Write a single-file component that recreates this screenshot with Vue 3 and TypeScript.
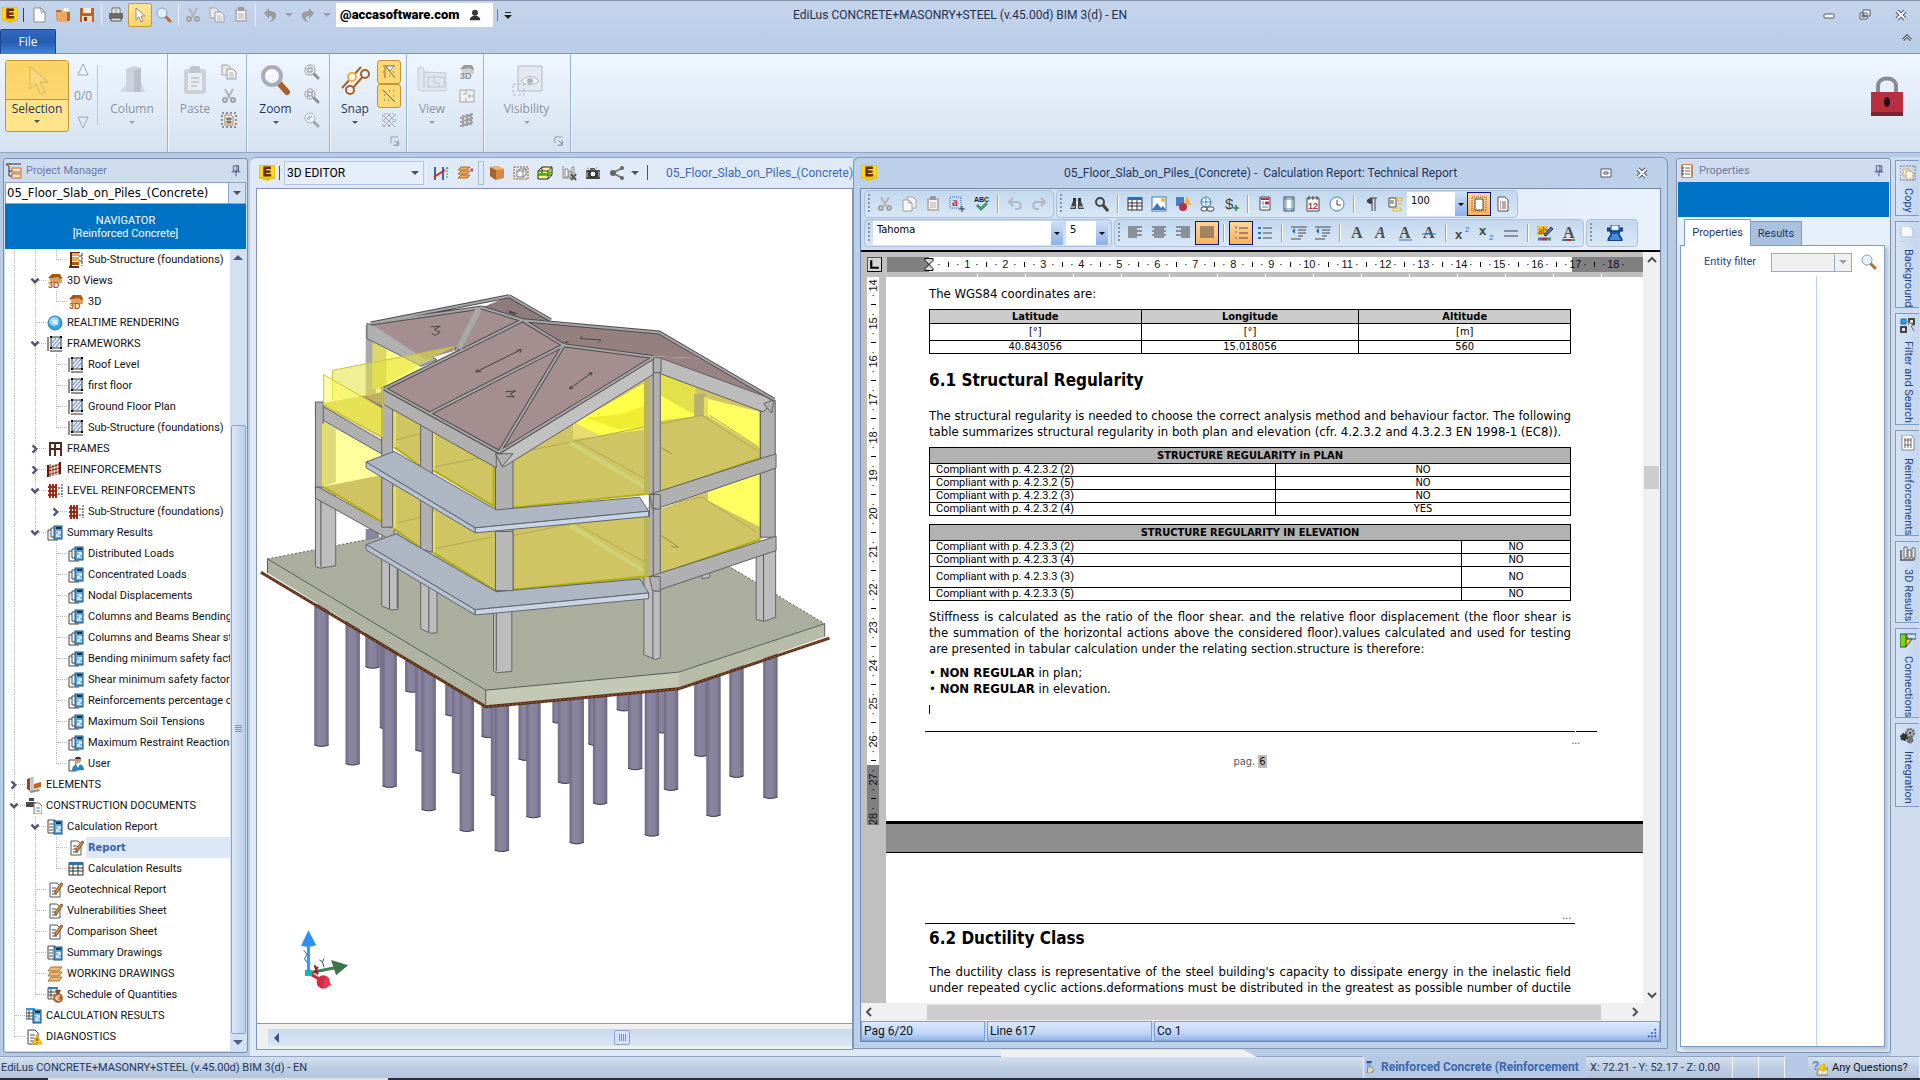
<script setup lang="ts">
interface TreeRow { level: number; icon: string; label: string; state?: 'open' | 'closed'; selected?: boolean; guides: number[]; last?: boolean }
interface Tool { icon?: string; label?: string; sep?: boolean; on?: boolean; combo?: string }

const page = (extra = '') => `<path d="M3 1h7l3 3v11H3z" fill="#fff" stroke="#555" />${extra}`
const lines = (xs: number[][], c = '#4a4a4a') => xs.map(l => `<path d="M${l[0]} ${l[1]}h${l[2]}" stroke="${c}" />`).join('')
const house = (body: string, roof: string, text: string) => `<path d="M2 5l3-4h7l3 4v5H4z" fill="${body}"/><path d="M1 5l4-4h8l2 4-2 1-2-2-6 1z" fill="${roof}"/><text x="1" y="15" font-family="Liberation Sans" font-weight="700" font-size="9" fill="${text}">3D</text>`
const calc = `<rect x="7" y="1" width="8" height="13" fill="#5fa4d8" stroke="#12507f"/><rect x="9" y="2" width="5" height="2" fill="#16324a"/><path d="M9 6h5v6H9z" fill="#cfe6f7"/><path d="M9 7h2v2H9zM12 9h2v2h-2z" fill="#82b6de"/>`
const lens = (c: string, h: string, inner = '') => `<path d="M9 9l5 5" stroke="${h}" stroke-width="3" stroke-linecap="round"/><circle cx="6" cy="6" r="5" fill="#e6f0fa" stroke="${c}" stroke-width="1"/>${inner}`
const alignLines = (w: number[], anchor: 'l' | 'c' | 'r') => w.map((n, i) => `<path d="M${anchor === 'l' ? 1 : anchor === 'c' ? 8 - n / 2 : 15 - n} ${2 + i * 2}h${n}" stroke="#444" />`).join('')
const letter = (extra: string, style = '') => `<text x="2" y="13" font-family="Liberation Serif" font-weight="700" font-size="16" fill="#4d4d4d" ${style}>A</text>${extra}`

const icons: Record<string, string> = {
  logo: `<rect x="0" y="0" width="16" height="13" fill="#ffd91a" stroke="#e0b400"/><path d="M0 13h16l-8 3z" fill="#e8c31a"/><text x="4" y="11" font-family="Liberation Sans" font-weight="700" font-size="12" fill="#6b2a14" stroke="#6b2a14">E</text>`,
  new: `<path d="M3 1h7l4 4v10H3z" fill="#fff" stroke="#8b8b8b"/><path d="M10 1v4h4" fill="none" stroke="#8b8b8b"/>`,
  open: `<path d="M1 3h5l1 2h8v9H2z" fill="#b8692e"/><path d="M1 5h11v10H3z" fill="#eaa765"/><path d="M9 1h4l1 3h-5z" fill="#fff"/>`,
  save: `<path d="M1 1h14v14H1z" fill="#b9622f"/><path d="M4 1h8v5H4z" fill="#f4ece4"/><path d="M3 9h10v6H3z" fill="#f0d9c4"/><path d="M5 10h3v4H5z" fill="#7b3d18"/>`,
  print: `<path d="M4 1h8v6H4z" fill="#fff" stroke="#666"/><path d="M1 6h14v6H1z" fill="#6b6b6b"/><path d="M3 11h10v3H3z" fill="#ddd" stroke="#555"/><path d="M6 3h4M6 5h4" stroke="#888"/>`,
  cursor: `<path d="M4 1v12l3-3 2 5 2-1-2-5h4z" fill="#fff" stroke="#8a8a8a"/>`,
  lens: lens('#7ba3c4', '#bd6a2c'),
  lensBox: lens('#9a9a9a', '#8f8f8f', '<path d="M4 4h4v4H4z" fill="none" stroke="#888"/>'),
  lensGrid: lens('#9a9a9a', '#8f8f8f', '<path d="M4 4h4v4H4zM3 3l1 1M9 3L8 4M3 9l1-1M9 9L8 8" fill="none" stroke="#888"/>'),
  lensNo: lens('#b0b0b0', '#a5a5a5', '<path d="M4 8l4-4M3 7l3-3" stroke="#999"/>'),
  cut: `<path d="M4 1l5 9M12 1l-5 9" stroke="#b4b4b4" stroke-width="2"/><circle cx="4" cy="12" r="2" fill="none" stroke="#a2a2a2" stroke-width="2"/><circle cx="12" cy="12" r="2" fill="none" stroke="#a2a2a2" stroke-width="2"/>`,
  copy: `<path d="M1 1h6l2 2v8H1z" fill="#e8e8e8" stroke="#a5a5a5"/><path d="M6 5h6l3 3v7H6z" fill="#f2f2f2" stroke="#9d9d9d"/>${lines([[8, 9, 4], [8, 11, 5], [8, 13, 5]], '#b5b5b5')}`,
  paste: `<rect x="2" y="2" width="12" height="13" rx="1" fill="#b4b4b4"/><path d="M4 4h8v9H4z" fill="#f3f3f3"/><rect x="5" y="0" width="6" height="4" rx="1" fill="#999"/>${lines([[5, 7, 6], [5, 9, 6], [5, 11, 6]], '#b0b0b0')}`,
  copyFlat: `<path d="M6 1h6l3 3v8H6z" fill="#f4f4f4" stroke="#a5a5a5"/><path d="M2 4h6l3 3v8H2z" fill="#f8f8f8" stroke="#a0a0a0"/><path d="M8 4v3h3" fill="none" stroke="#a0a0a0"/>`,
  undo: `<path d="M2 6l5-5v3c5 0 8 2 7 6-1 3-4 5-7 5 4-2 5-6 0-6v3z" fill="#9c9c9c"/>`,
  redo: `<path d="M14 6L9 1v3C4 4 1 6 2 10c1 3 4 5 7 5-4-2-5-6 0-6v3z" fill="#9c9c9c"/>`,
  undoThin: `<path d="M2 6h8c5 0 5 7 0 7H8M6 2L2 6l4 4" fill="none" stroke="#b3b9c2" stroke-width="2"/>`,
  redoThin: `<path d="M14 6H6c-5 0-5 7 0 7h2M10 2l4 4-4 4" fill="none" stroke="#b3b9c2" stroke-width="2"/>`,
  user: `<circle cx="8" cy="5" r="4" fill="#3a3a3a"/><path d="M1 15c0-4 3-6 7-6s7 2 7 6z" fill="#333"/>`,
  pasteArea: `<path d="M1 1h14v14H1z" fill="none" stroke="#333" stroke-dasharray="2 2"/><path d="M4 3h6l2 2v8H4z" fill="#fff" stroke="#c27a3a"/><path d="M5 7h6M5 10h6M7 5v7M9 5v7" stroke="#555"/>`,
  snapA: `<path d="M2 2h12M5 3l9 11M4 3v11" stroke="#8a6b2d"/><path d="M5 2l4 5 4-5z" fill="#fff" stroke="#888"/><path d="M2 8h1M8 12h1M12 8h1" stroke="#555"/>`,
  snapB: `<path d="M2 2l12 12" stroke="#6d5a22"/><path d="M3 7h1M3 12h1M8 3h1M12 3h1M12 8h1M7 12h1" stroke="#555"/>`,
  hatch: `<path d="M1 2l13 13M1 7l8 8M1 12l3 3M6 1l9 9M11 1l4 4M15 2L2 15M15 7l-8 8M10 1l-9 9M5 1L1 5" stroke="#a5a9af"/>`,
  house3d: house('#d0d0d0', '#9b9b9b', '#8b8b8b'),
  plan: `<path d="M1 2h14v12H1zM7 2v4H4M7 14v-4M10 8h5M10 6v4" fill="#f2f2f2" stroke="#a5a5a5"/>`,
  rebarGray: `<path d="M1 6l13-4M1 10l13-4M1 14l13-4M4 3v12M8 2v12M12 1v12" stroke="#a2a2a2" stroke-width="2"/>`,
  launcher: `<path d="M1 8V1h8" fill="none" stroke="#8b9bb0"/><path d="M5 5l4 4M9 5v5H4" fill="none" stroke="#6b7d96"/>`,
  tree: `<path d="M3 3v10h4M3 8h4M1 1h4" fill="none" stroke="#333"/><rect x="6" y="5" width="9" height="4" fill="#ffe7c9" stroke="#c4672a"/><rect x="6" y="11" width="9" height="4" fill="#ffe7c9" stroke="#c4672a"/><path d="M4 1h11" stroke="#333"/><rect x="0" y="0" width="3" height="3" fill="#c4672a"/>`,
  pin: `<path d="M5 2h6v6H5zM9 2v6M3 9h10M8 9v5" fill="none" stroke="#3d4a73"/>`,
  foundation: `<path d="M3 0h9M3 0v15M1 15h10" stroke="#5a2d0c" stroke-width="2"/><path d="M4 1h7v3H4zM4 5h7v4H4zM4 10h7v3H4z" fill="#e9a868"/><path d="M4 10h7v3H4z" fill="#a55a1c"/><path d="M11 4h3M11 9h3M14 1v13" stroke="#333" stroke-dasharray="3 1"/>`,
  h3d: house('#d9a066', '#a8560e', '#b4560a'),
  globe: `<circle cx="8" cy="8" r="7" fill="#39a5e0"/><circle cx="7" cy="6" r="5" fill="#8fd4f6"/><path d="M4 4l6 1 1 5-5-1z" fill="#e4f6ff" opacity=".8"/><circle cx="8" cy="8" r="7" fill="none" stroke="#1c7ab8"/>`,
  frameworks: `<path d="M1 1v14M3 15h12" stroke="#222"/><path d="M4 1h10v11H4z" fill="#dfe9f7" stroke="#333"/><path d="M5 11l8-9M5 7l4-5M9 11l4-5" stroke="#5d7fb0"/><path d="M3 1h2M13 1h2M3 12h2M13 12h2" stroke="#000" stroke-width="2"/>`,
  frames: `<path d="M2 2h13M2 8h13" stroke="#33241c" stroke-width="2"/><path d="M3 1v14M8 1v14M14 1v14" stroke="#5a2a20" stroke-width="2"/>`,
  rebar: `<path d="M1 6l13-4M1 9l13-3M1 13l13-4M3 2v13M6 3v11M9 2v11M12 1v12" stroke="#8d2a10"/><path d="M1 3v12M13 0v12" stroke="#5c1b0a" stroke-width="2"/>`,
  levelRebar: `<path d="M1 4h9M1 8h9M1 12h9M3 1v14M6 1v14M9 1v14" stroke="#9a2a12" stroke-width="2"/><path d="M11 5h4M11 11h4M15 1v13" stroke="#333" stroke-dasharray="2 1"/>`,
  results: `<path d="M1 5v10h10M1 5h3M4 3v9h5M4 3h3" fill="none" stroke="#444"/>${calc}`,
  userResults: `<path d="M1 4h7v11H1z" fill="#fff" stroke="#444"/><path d="M4 15c0-5 3-7 6-7s6 2 6 6z" fill="#2e7fc2"/><path d="M8 8h4l-2 4z" fill="#fff"/><circle cx="10" cy="4" r="3" fill="#c99a76"/><path d="M7 3c0-3 6-3 6 0z" fill="#333"/>`,
  elements: `<path d="M1 2l3-1v13l-3-2z" fill="#8c4a2a"/><path d="M5 1l2-1v13H5z" fill="#ddd" stroke="#aaa"/><path d="M8 7l7-2v5l-7 2z" fill="#c0641e"/><path d="M3 14l10-2 1 2-9 2z" fill="#9b8b80"/>`,
  documents: `<path d="M3 0h5v3H3zM0 4h10v5H0z" fill="#4a4a4a"/><path d="M8 5h5l3 3v8H8z" fill="#fff" stroke="#777"/>${lines([[10, 10, 4], [10, 13, 4]], '#4a84b8')}`,
  calcReport: `<path d="M1 1h7v13H1z" fill="#fff" stroke="#444"/>${lines([[2, 5, 4], [2, 8, 4], [2, 11, 4]])}<g transform="translate(0 1)">${calc}</g>`,
  report: `${page(lines([[5, 6, 4], [5, 9, 4], [5, 12, 5]]))}<path d="M14 1l2 1-6 9-2 1v-3z" fill="#d18b4a" stroke="#8a4f1c"/>`,
  table: `<rect x="1" y="2" width="14" height="12" fill="#fff" stroke="#333"/><path d="M1 1h14v3H1z" fill="#2c6fb0"/><path d="M1 7h14M1 10h14M5 4v10M10 4v10" stroke="#333"/>`,
  sheets: `<path d="M4 1h11l-3 4H1zM4 6h11l-3 4H1zM4 11h11l-3 4H1z" fill="#eebb77" stroke="#b3712a"/>`,
  schedule: `<path d="M1 1h9v11H1z" fill="#fff" stroke="#444"/><path d="M1 0h10v2H1z" fill="#2c7fc0"/><path d="M1 5h8M1 8h8M4 2v9" stroke="#444"/><circle cx="11" cy="11" r="5" fill="#b5672c"/><path d="M8 3h6l-2 4h-2z" fill="#8b4a1c"/><path d="M13 9c-3-1-4 1-4 2s1 3 4 2M8 11h4" fill="none" stroke="#fff"/>`,
  calcResults: `<path d="M0 1h8v10H0z" fill="#fff" stroke="#444"/><path d="M0 0h9v2H0z" fill="#2c9fd8"/><path d="M0 5h8M0 8h8M3 2v9" stroke="#444"/><g transform="translate(0 1)">${calc}</g>`,
  diagnostics: `<path d="M2 1h7l3 3v11H2z" fill="#fff" stroke="#444"/>${lines([[4, 6, 5], [4, 9, 4], [4, 12, 3]])}<path d="M11 6l5 9H6z" fill="#ffc61a" stroke="#e0a200"/><path d="M11 9v3M11 13v1" stroke="#333"/>`,
  sectionH: `<path d="M2 2v13M10 2v13" stroke="#3f67b0" stroke-width="2"/><path d="M1 12l11-7" stroke="#d02a3a" stroke-width="2"/><path d="M14 2v12M13 4l1-2 1 2" fill="none" stroke="#3d9b6a" stroke-dasharray="2 1"/>`,
  layers: `<path d="M4 2h9l-3 3H1zM4 6h9l-3 3H1zM4 10h9l-3 3H1z" fill="#eeb05c" stroke="#b0682a"/><path d="M15 3v4M13 5h3" stroke="#c02030"/>`,
  cube: `<path d="M1 2l8-1 6 3v9l-8 2-6-4z" fill="#d28a48"/><path d="M1 2l6 3v10l-6-4z" fill="#a8622a"/><path d="M1 2l8-1 6 3-8 1z" fill="#e8b478"/>`,
  cubeSel: `<path d="M1 2h14v12H1z" fill="none" stroke="#a5551c" stroke-dasharray="2 1"/><path d="M4 6l3-2h6v6l-3 2H4z" fill="#fff" stroke="#777"/><path d="M4 6h6v6M10 6l3-2" fill="none" stroke="#777"/>`,
  cubeGreen: `<path d="M1 6l4-4h10v8l-4 4H1z" fill="#f8f890" stroke="#222"/><path d="M1 6h10v8M11 6l4-4M5 2v8H1M5 10h10" fill="none" stroke="#333"/><path d="M1 9l10 0 4-3" fill="none" stroke="#4caf1e" stroke-width="2"/>`,
  barsX: `<path d="M2 1v12h12" fill="none" stroke="#888"/><path d="M4 4h3v8H4zM8 6h2v6H8zM11 2h2v6h-2z" fill="#fff" stroke="#888"/><path d="M10 9l5 6M15 9l-5 6" stroke="#555" stroke-width="2"/>`,
  camera: `<rect x="1" y="5" width="14" height="9" rx="1" fill="#444"/><path d="M5 3h5v3H5z" fill="#666"/><circle cx="8" cy="9" r="3" fill="#fff" stroke="#111"/><path d="M2 7v5M13 7h1v5" stroke="#ccc"/><path d="M2 3l2 1M12 2l-1 2" stroke="#999"/>`,
  share: `<path d="M13 3L4 8l9 5" fill="none" stroke="#777" stroke-width="2"/><circle cx="13" cy="3" r="2" fill="#666"/><circle cx="4" cy="8" r="3" fill="#666"/><circle cx="13" cy="13" r="2" fill="#666"/>`,
  textAdd: `<path d="M1 1h11v11H1z" fill="none" stroke="#1f62b0" stroke-dasharray="1 1"/><text x="3" y="10" font-family="Liberation Serif" font-weight="700" font-size="12" fill="#c02a38">a</text><path d="M13 10v6M10 13h6" stroke="#333"/>`,
  spell: `<text x="1" y="6" font-family="Liberation Sans" font-weight="700" font-size="7" fill="#222">ABC</text><path d="M4 9l4 4 6-6" fill="none" stroke="#3f9a68" stroke-width="3"/>`,
  binoc: `<path d="M4 2h3v5H4zM9 2h3v5H9z" fill="#333"/><path d="M1 13l3-8h3v8zM15 13l-3-8H9v8z" fill="#444"/><path d="M2 11h4M10 11h4M7 7h2" stroke="#fff"/>`,
  find: `<circle cx="7" cy="6" r="4" fill="none" stroke="#444" stroke-width="2"/><path d="M10 9l5 6" stroke="#444" stroke-width="3"/>`,
  image: `<rect x="1" y="1" width="14" height="14" fill="#fff" stroke="#3f78b5"/><path d="M1 14l5-7 4 5 2-2 3 4z" fill="#3f78b5"/><circle cx="12" cy="4" r="2" fill="#f0b429"/>`,
  shapes: `<rect x="1" y="1" width="8" height="9" fill="#4a7fc0"/><path d="M12 0l4 9H9z" fill="#f3b62b"/><circle cx="8" cy="11" r="4" fill="#b8304a"/>`,
  link: `<circle cx="7" cy="6" r="5" fill="#fff" stroke="#3f88c0"/><path d="M2 6h10M7 1v10M4 2c-2 3-2 6 0 8M10 2c2 3 2 6 0 8" fill="none" stroke="#3f88c0"/><rect x="2" y="11" width="6" height="4" rx="2" fill="#fff" stroke="#444"/><rect x="8" y="11" width="7" height="4" rx="2" fill="#fff" stroke="#444"/>`,
  dollar: `<text x="2" y="13" font-family="Liberation Sans" font-size="15" fill="#444">$</text><path d="M13 9v6M10 12h6" stroke="#3f9a68" stroke-width="2"/>`,
  pageRed: `<path d="M3 1h10v13H3z" fill="#fff" stroke="#444"/><path d="M4 3h8" stroke="#b8304a" stroke-width="2"/><path d="M8 7h4" stroke="#b8304a" stroke-width="3"/>${lines([[5, 6, 2], [5, 8, 2], [5, 11, 6]], '#3f78b5')}`,
  pageBlue: `<path d="M3 1h10v14H3z" fill="#fff" stroke="#444"/><path d="M5 1v14M11 1v14M3 3h10M3 13h10" stroke="#3f88c0"/>`,
  calendar: `<path d="M2 2h12v13H2z" fill="#fff" stroke="#444"/><path d="M4 0v4M8 0v4M12 0v4" stroke="#444"/><text x="3" y="13" font-family="Liberation Sans" font-weight="700" font-size="9" fill="#b8304a">12</text>`,
  clock: `<circle cx="8" cy="8" r="7" fill="#fff" stroke="#3f88c0"/><path d="M8 4v5h4" fill="none" stroke="#444"/>`,
  pilcrow: `<path d="M7 2h7M9 2v13M12 2v13" stroke="#444"/><path d="M9 2c-7 0-7 6 0 6z" fill="#444"/>`,
  docNote: `<path d="M2 2h7v9H2z" fill="#fff" stroke="#444"/>${lines([[3, 5, 4], [3, 7, 4]])}<path d="M9 2h6v3h-4zM6 12h8v3H6zM11 8h4" fill="none" stroke="#e8b51e"/>`,
  pageView: `<path d="M1 1h14v14H1z" fill="none" stroke="#a3402a" stroke-dasharray="1 1"/><path d="M4 3h8v11H4z" fill="#fff" stroke="#444"/>`,
  doc: page(lines([[5, 6, 1], [7, 6, 4], [5, 8, 1], [7, 8, 4], [5, 10, 1], [7, 10, 4], [5, 12, 1], [7, 12, 4]], '#8a4a5a')),
  alL: alignLines([14, 9, 14, 9, 14, 9], 'l'),
  alC: alignLines([14, 10, 14, 10, 14, 10], 'c'),
  alR: alignLines([14, 9, 14, 9, 14, 9], 'r'),
  alJ: alignLines([14, 14, 14, 14, 14, 14], 'l'),
  num: `<path d="M3 1v3M2 7h2M2 13h2" stroke="#2a72b8"/>${lines([[6, 3, 9], [6, 8, 9], [6, 13, 9]])}`,
  bul: `<path d="M1 3h3M1 8h3M1 13h3" stroke="#2a72b8" stroke-width="2"/>${lines([[6, 3, 9], [6, 8, 9], [6, 13, 9]])}`,
  ind: `<path d="M1 6l3-3v6z" fill="#2a72b8"/>${lines([[0, 2, 16], [7, 5, 8], [7, 8, 8], [7, 11, 5], [0, 14, 10]])}`,
  bold: letter(''),
  italic: letter('', 'font-style="italic"'),
  under: letter('<path d="M2 15h13" stroke="#2a72b8"/>'),
  strike: letter('<path d="M1 9h14" stroke="#2a72b8"/>'),
  sup: `<text x="0" y="14" font-family="Liberation Sans" font-weight="700" font-size="13" fill="#444">x</text><text x="10" y="7" font-family="Liberation Sans" font-size="8" fill="#2a72b8">2</text>`,
  sub: `<text x="0" y="10" font-family="Liberation Sans" font-weight="700" font-size="13" fill="#444">x</text><text x="10" y="15" font-family="Liberation Sans" font-size="8" fill="#2a72b8">2</text>`,
  equal: `<path d="M1 6h14M1 11h14" stroke="#444"/>`,
  hilite: `<path d="M0 1h11v9H0z" fill="#f2c12e"/><text x="1" y="9" font-family="Liberation Serif" font-size="10" fill="#444">ab</text><path d="M14 2l2 2-7 7-2-1z" fill="#4a84c0" stroke="#333"/><path d="M1 14h4" stroke="#3f78b5" stroke-width="3"/><path d="M5 14h5" stroke="#b8304a" stroke-width="3"/><path d="M10 14h4" stroke="#3f9a68" stroke-width="3"/>`,
  color: letter('<path d="M1 15h4" stroke="#3f78b5" stroke-width="2"/><path d="M5 15h5" stroke="#b8304a" stroke-width="2"/><path d="M10 15h4" stroke="#3f9a68" stroke-width="2"/>'),
  typewriter: `<path d="M4 0h8v6H4z" fill="#e8f1fc" stroke="#123a7c"/><path d="M0 3h3v3h10V3h3v3h-3l-1 3 3 5v2H1v-2l3-5-1-3H0z" fill="#1460b8" stroke="#0b2e66"/><path d="M5 10h6M4 12h8M3 14h10" stroke="#7fb8f2"/>`,
  clipboard: `<rect x="2" y="1" width="12" height="14" rx="2" fill="#c08a5a"/><path d="M4 2h8v12H4z" fill="#fff"/>${lines([[6, 5, 5], [6, 8, 5], [6, 11, 5]], '#666')}<path d="M3 5h2M3 8h2M3 11h2" stroke="#333"/>`,
  sideCopy: `<path d="M0 1h15v14H0z" fill="none" stroke="#777" stroke-dasharray="2 1"/><path d="M3 4h6v7H3z" fill="#f4ead8" stroke="#c9a87a"/><path d="M6 6h5l2 2v6H6z" fill="#f9f3e6" stroke="#c9a87a"/>`,
  sideBg: `<path d="M1 0h9l3 4v7H1z" fill="#f6f8fc" stroke="#b5bfd0"/><text x="1" y="15" font-family="Liberation Sans" font-weight="700" font-size="10" fill="#ee9a72">BG</text>`,
  sideFilter: `<path d="M1 1h5v5H1z" fill="#2ea0e0" stroke="#1a6aa8"/><path d="M9 1h5v5H9zM1 9h5v5H1z" fill="#ddd" stroke="#444" stroke-width="2"/><path d="M7 4l7 3-3 1 3 5" fill="#fff" stroke="#666"/>`,
  sideRebar: `<path d="M2 0h9l3 3v12H2z" fill="#fff" stroke="#888"/><path d="M4 5h7M4 10h7M5 3v10M8 3v10M11 3v10" stroke="#666"/>`,
  sideBars: `<path d="M1 4v10h12l2-2" fill="none" stroke="#777" stroke-width="2"/><path d="M4 1h3v11H4zM8 4h3v8H8zM12 2h3v10h-3z" fill="#eee" stroke="#666"/>`,
  sideConn: `<path d="M0 1h6v13H0z" fill="#6fdc1a" stroke="#444"/><path d="M6 1h10v5H8z" fill="#bfe6fa" stroke="#444"/><path d="M6 6h6l-6 8z" fill="#ffd21a" stroke="#444"/>`,
  gears: `<circle cx="10" cy="5" r="4" fill="#aaa" stroke="#666" stroke-width="2" stroke-dasharray="2 1"/><circle cx="4" cy="9" r="3" fill="#333" stroke="#333" stroke-width="2" stroke-dasharray="2 1"/><circle cx="10" cy="12" r="3" fill="#777" stroke="#555" stroke-dasharray="2 1"/><circle cx="10" cy="5" r="1" fill="#222"/>`,
  ask: `<text x="0" y="10" font-family="Liberation Sans" font-weight="700" font-size="12" fill="#5b86cf">?</text><path d="M5 15l1-6h10v6z" fill="#e8e4d0" stroke="#777"/><path d="M6 9l5-5 2 1-2 4 5-2-4 4z" fill="#ffd21a" stroke="#d9a800"/>`,
  hammer: `<path d="M2 0h7v3H2z" fill="#2b5d9a"/><path d="M4 3l8 8-3 5H3z" fill="#e6d3b3" stroke="#7d6544"/><path d="M3 5h6v4H3z" fill="#7eb4dd"/>`,
}

const quickTools: Tool[] = [
  { icon: 'new', label: 'New' }, { icon: 'open', label: 'Open' }, { icon: 'save', label: 'Save' }, { sep: true },
  { icon: 'print', label: 'Print' }, { icon: 'cursor', label: 'Select', on: true }, { icon: 'lens', label: 'Zoom' }, { sep: true },
  { icon: 'cut', label: 'Cut' }, { icon: 'copy', label: 'Copy' }, { icon: 'paste', label: 'Paste' }, { sep: true },
]

const pile = (x: number, b: number) => ({ x, b: b + 930 })
const piles = [
  [296, 262], [398, 334], [501, 405], [594, 470], [776, 427], [868, 493], [941, 390], [1040, 456],
  [333, 444], [424, 511], [518, 577], [618, 645], [689, 538], [790, 607], [1140, 526], [970, 566],
  [165, 496], [245, 552], [340, 619], [440, 689], [538, 751], [628, 811], [709, 710], [820, 788],
  [880, 670], [1062, 628], [1013, 765], [1230, 589], [1171, 706], [1317, 652],
].map(([x, b]) => pile(x, b))

const res = (label: string): TreeRow => ({ level: 2, icon: 'results', label, guides: [0, 2] })
const rows: TreeRow[] = [
  { level: 2, icon: 'foundation', label: 'Sub-Structure (foundations)', guides: [0, 1, 2], last: true },
  { level: 1, icon: 'h3d', label: '3D Views', state: 'open', guides: [0, 1] },
  { level: 2, icon: 'h3d', label: '3D', guides: [0, 1, 2], last: true },
  { level: 1, icon: 'globe', label: 'REALTIME RENDERING', guides: [0, 1] },
  { level: 1, icon: 'frameworks', label: 'FRAMEWORKS', state: 'open', guides: [0, 1] },
  { level: 2, icon: 'frameworks', label: 'Roof Level', guides: [0, 1, 2] },
  { level: 2, icon: 'frameworks', label: 'first floor', guides: [0, 1, 2] },
  { level: 2, icon: 'frameworks', label: 'Ground Floor Plan', guides: [0, 1, 2] },
  { level: 2, icon: 'frameworks', label: 'Sub-Structure (foundations)', guides: [0, 1, 2], last: true },
  { level: 1, icon: 'frames', label: 'FRAMES', state: 'closed', guides: [0, 1] },
  { level: 1, icon: 'rebar', label: 'REINFORCEMENTS', state: 'closed', guides: [0, 1] },
  { level: 1, icon: 'levelRebar', label: 'LEVEL REINFORCEMENTS', state: 'open', guides: [0, 1] },
  { level: 2, icon: 'levelRebar', label: 'Sub-Structure (foundations)', state: 'closed', guides: [0, 1] },
  { level: 1, icon: 'results', label: 'Summary Results', state: 'open', guides: [0, 1], last: true },
  res('Distributed Loads'), res('Concentrated Loads'), res('Nodal Displacements'),
  res('Columns and Beams Bending'), res('Columns and Beams Shear st'), res('Bending minimum safety factor'),
  res('Shear minimum safety factor'), res('Reinforcements percentage o'), res('Maximum Soil Tensions'), res('Maximum Restraint Reactions'),
  { level: 2, icon: 'userResults', label: 'User', guides: [0, 2], last: true },
  { level: 0, icon: 'elements', label: 'ELEMENTS', state: 'closed', guides: [0] },
  { level: 0, icon: 'documents', label: 'CONSTRUCTION DOCUMENTS', state: 'open', guides: [0] },
  { level: 1, icon: 'calcReport', label: 'Calculation Report', state: 'open', guides: [0, 1] },
  { level: 2, icon: 'report', label: 'Report', guides: [0, 1, 2], selected: true },
  { level: 2, icon: 'table', label: 'Calculation Results', guides: [0, 1, 2], last: true },
  { level: 1, icon: 'report', label: 'Geotechnical Report', guides: [0, 1] },
  { level: 1, icon: 'report', label: 'Vulnerabilities Sheet', guides: [0, 1] },
  { level: 1, icon: 'report', label: 'Comparison Sheet', guides: [0, 1] },
  { level: 1, icon: 'calcReport', label: 'Summary Drawings', guides: [0, 1] },
  { level: 1, icon: 'sheets', label: 'WORKING DRAWINGS', guides: [0, 1] },
  { level: 1, icon: 'schedule', label: 'Schedule of Quantities', guides: [0, 1], last: true },
  { level: 0, icon: 'calcResults', label: 'CALCULATION RESULTS', guides: [0] },
  { level: 0, icon: 'diagnostics', label: 'DIAGNOSTICS', guides: [0], last: true },
]

const t = (icon: string, label: string, on = false): Tool => ({ icon, label, on })
const sep: Tool = { sep: true }
const editGroup: Tool[] = [t('cut', 'Cut'), t('copyFlat', 'Copy'), t('paste', 'Paste'), t('textAdd', 'Insert text'), t('spell', 'Spelling'), sep, t('undoThin', 'Undo'), t('redoThin', 'Redo')]
const insertGroup: Tool[] = [
  t('binoc', 'Find'), t('find', 'Zoom'), sep, t('table', 'Table'), t('image', 'Image'), t('shapes', 'Shapes'), t('link', 'Link'), t('dollar', 'Field'), sep,
  t('pageRed', 'Header'), t('pageBlue', 'Margins'), t('calendar', 'Date'), t('clock', 'Time'), sep, t('pilcrow', 'Show marks'), t('docNote', 'Notes'),
  { combo: '100' }, t('pageView', 'Page view', true), t('doc', 'Document'),
]
const formatGroup: Tool[] = [
  t('alL', 'Align left'), t('alC', 'Centre'), t('alR', 'Align right'), t('alJ', 'Justify', true), sep, t('num', 'Numbering', true), t('bul', 'Bullets'), sep,
  t('ind', 'Decrease indent'), t('ind', 'Increase indent'), sep, t('bold', 'Bold'), t('italic', 'Italic'), t('under', 'Underline'), t('strike', 'Strikethrough'), sep,
  t('sup', 'Superscript'), t('sub', 'Subscript'), t('equal', 'Double line'), sep, t('hilite', 'Highlight'), t('color', 'Font colour'),
]
const editorTools: Tool[] = [t('cube', 'Solid'), t('cubeSel', 'Select volume'), t('cubeGreen', 'Section box'), t('barsX', 'Results off'), t('camera', 'Snapshot'), t('share', 'Share')]

const planRows = [['Compliant with p. 4.2.3.2 (2)', 'NO'], ['Compliant with p. 4.2.3.2 (5)', 'NO'], ['Compliant with p. 4.2.3.2 (3)', 'NO'], ['Compliant with p. 4.2.3.2 (4)', 'YES']]
const elevRows = [['Compliant with p. 4.2.3.3 (2)', 'NO'], ['Compliant with p. 4.2.3.3 (4)', 'NO'], ['Compliant with p. 4.2.3.3 (3)', 'NO'], ['Compliant with p. 4.2.3.3 (5)', 'NO']]
const vRuler = Array.from({ length: 15 }, (_, i) => 14 + i)

const sideTabs = [
  { icon: 'sideCopy', label: 'Copy', h: 56 }, { icon: 'sideBg', label: 'Background', h: 87 }, { icon: 'sideFilter', label: 'Filter and Search', h: 112 },
  { icon: 'sideRebar', label: 'Reinforcements', h: 106 }, { icon: 'sideBars', label: '3D Results', h: 82 }, { icon: 'sideConn', label: 'Connections', h: 90 },
  { icon: 'gears', label: 'Integration', h: 84 },
]
</script>

<template>
  <div class="app">
    <header class="titlebar">
      <div class="quick">
        <button class="tb logo" aria-label="Application menu"><svg viewBox="0 0 16 16" v-html="icons.logo" /></button>
        <i class="bar" />
        <template v-for="(q, i) in quickTools" :key="i">
          <i v-if="q.sep" class="qsep" />
          <button v-else class="tb" :class="{ on: q.on }" :aria-label="q.label"><svg viewBox="0 0 16 16" v-html="icons[q.icon!]" /></button>
        </template>
        <button class="tb" aria-label="Undo"><svg viewBox="0 0 16 16" v-html="icons.undo" /></button><i class="caret dim" />
        <button class="tb" aria-label="Redo"><svg viewBox="0 0 16 16" v-html="icons.redo" /></button><i class="caret dim" />
        <div class="account"><b>@accasoftware.com</b><svg viewBox="0 0 16 16" v-html="icons.user" /></div>
        <i class="thin" /><svg class="more" viewBox="0 0 8 8"><path d="M1 1h6v1H1zM0 4h8L4 8z" fill="#222" /></svg>
      </div>
      <h1 class="apptitle">EdiLus CONCRETE+MASONRY+STEEL (v.45.00d) BIM 3(d) - EN</h1>
      <div class="winbtns">
        <button aria-label="Minimise"><svg viewBox="0 0 12 12"><rect x="1" y="5" width="10" height="4" rx="1" fill="#fff" stroke="#4f5668" /></svg></button>
        <button aria-label="Restore"><svg viewBox="0 0 12 12"><path d="M4 1h7v6H4zM1 4h7v6H1zM3 6h3v2H3z" fill="#fff" stroke="#4f5668" /></svg></button>
        <button aria-label="Close"><svg viewBox="0 0 12 12"><path d="M2 2l8 8M10 2l-8 8" stroke="#4f5668" stroke-width="4" /><path d="M2 2l8 8M10 2l-8 8" stroke="#fff" stroke-width="2" /></svg></button>
      </div>
      <div class="tabrow">
        <button class="file">File</button>
        <button class="collapse" aria-label="Collapse ribbon"><svg viewBox="0 0 10 8"><path d="M1 6l4-4 4 4" fill="none" stroke="#4f5668" stroke-width="3" /><path d="M1 6l4-4 4 4" fill="none" stroke="#fff" /></svg></button>
      </div>
    </header>

    <section class="ribbon">
      <div class="group sel">
        <button class="big active"><span class="face"><svg viewBox="0 0 32 32"><path d="M9 2v23l6-5 4 10 5-2-5-10h8z" fill="#f9d87c" stroke="#d9b25a" /></svg></span><span class="cap">Selection</span><i class="caret" /></button>
        <div class="counter">
          <svg viewBox="0 0 14 14"><path d="M7 1l5 11H2z" fill="none" stroke="#a3aab5" /></svg>
          <span>0/0</span>
          <svg viewBox="0 0 14 14"><path d="M7 13L2 2h10z" fill="none" stroke="#a3aab5" /></svg>
        </div>
        <i class="gsep" />
        <button class="big off column"><span class="face"><svg viewBox="0 0 32 32"><path d="M10 5l8-3 7 2v24H10z" fill="#cdd3dc" /><path d="M18 7l7-3v24h-7z" fill="#bac1cc" /><path d="M3 28l7-7v7zM25 28V18l4 10z" fill="#d3d9e1" /></svg></span><span class="cap">Column</span><i class="caret dim" /></button>
      </div>
      <div class="group pasteg">
        <button class="big off"><span class="face"><svg viewBox="0 0 32 32"><rect x="5" y="5" width="22" height="25" rx="3" fill="#cbd1d9" /><path d="M9 9h14v17H9z" fill="#eaeef3" /><rect x="11" y="2" width="10" height="7" rx="2" fill="#bec5cf" /><path d="M12 14h8M12 18h8M12 22h6" stroke="#c6ccd5" stroke-width="2" /></svg></span><span class="cap">Paste</span></button>
        <div class="smalls"><button v-for="n in ['copy', 'cut', 'pasteArea']" :key="n" :aria-label="n"><svg viewBox="0 0 16 16" v-html="icons[n]" /></button></div>
      </div>
      <div class="group zoomg">
        <button class="big"><span class="face"><svg viewBox="0 0 32 32"><path d="M18 18l9 10" stroke="#a8602c" stroke-width="6" stroke-linecap="round" /><circle cx="12" cy="12" r="9" fill="#f2f5f9" stroke="#a9aeb6" stroke-width="4" /><path d="M7 11c1-4 6-5 9-2" fill="none" stroke="#fff" stroke-width="3" /></svg></span><span class="cap">Zoom</span><i class="caret" /></button>
        <div class="smalls"><button v-for="n in ['lensBox', 'lensGrid', 'lensNo']" :key="n" :aria-label="n"><svg viewBox="0 0 16 16" v-html="icons[n]" /></button></div>
      </div>
      <div class="group snapg">
        <button class="big"><span class="face"><svg viewBox="0 0 32 32"><path d="M3 24L22 3M12 26l15-17" stroke="#a5612c" stroke-width="2" /><circle cx="13" cy="13" r="4" fill="#fff" stroke="#f0b03a" stroke-width="2" /><circle cx="26" cy="10" r="4" fill="#eef4fb" stroke="#a5612c" stroke-width="2" /><circle cx="11" cy="26" r="4" fill="#eef4fb" stroke="#a5612c" stroke-width="2" /></svg></span><span class="cap">Snap</span><i class="caret" /></button>
        <div class="smalls"><button v-for="(n, i) in ['snapA', 'snapB', 'hatch']" :key="n" :class="{ on: i < 2 }" :aria-label="n"><svg viewBox="0 0 16 16" v-html="icons[n]" /></button></div>
        <svg class="launcher" viewBox="0 0 12 12" v-html="icons.launcher" />
      </div>
      <div class="group viewg">
        <button class="big off"><span class="face"><svg viewBox="0 0 32 32"><path d="M2 4c6-3 6 2 6 4l22 1v18H6c-4 0-4-4-4-4z" fill="#e1e6ed" stroke="#c3c9d2" /><path d="M12 13h16v10H12zM18 13v6h5v4M8 8v16" fill="none" stroke="#bcc3cd" /></svg></span><span class="cap">View</span><i class="caret dim" /></button>
        <div class="smalls"><button v-for="n in ['house3d', 'plan', 'rebarGray']" :key="n" :aria-label="n"><svg viewBox="0 0 16 16" v-html="icons[n]" /></button></div>
      </div>
      <div class="group visg">
        <button class="big off"><span class="face"><svg viewBox="0 0 32 32"><path d="M7 2h24v25H7z" fill="#e4e9f0" stroke="#b4bac5" /><path d="M2 20h11v11H2z" fill="none" stroke="#b4bac5" stroke-dasharray="3 2" /><path d="M10 17c5-6 13-6 18 0-5 5-13 5-18 0z" fill="#f2f4f7" stroke="#b0b6c1" /><circle cx="19" cy="17" r="3" fill="#b0b6c1" /></svg></span><span class="cap">Visibility</span><i class="caret dim" /></button>
        <svg class="launcher" viewBox="0 0 12 12" v-html="icons.launcher" />
      </div>
      <svg class="lock" viewBox="0 0 34 42"><path d="M8 20v-8c0-10 18-10 18 0v8" fill="none" stroke="#8b8b8b" stroke-width="4" /><path d="M1 18h32v24H1z" fill="#b8303f" /><path d="M1 38h32v4H1z" fill="#7d2230" /><ellipse cx="17" cy="28" rx="3" ry="5" fill="#1c1114" /></svg>
    </section>

    <main class="main">
      <aside class="panel nav">
        <div class="phead"><svg viewBox="0 0 16 16" v-html="icons.tree" /><span>Project Manager</span><svg class="pin" viewBox="0 0 16 16" v-html="icons.pin" /></div>
        <div class="combo"><select aria-label="Project"><option>05_Floor_Slab_on_Piles_(Concrete)</option></select><i class="drop"><i class="caret" /></i></div>
        <div class="navigator">NAVIGATOR<br>[Reinforced Concrete]</div>
        <div class="treebox">
          <ul class="tree">
            <li v-for="(r, i) in rows" :key="i" :class="['l' + r.level, { selected: r.selected }]">
              <i v-for="g in r.guides" :key="g" class="guide" :class="['g' + g, { half: r.last && g === r.level }]" />
              <i class="branch" />
              <svg class="chev" viewBox="0 0 10 10"><path v-if="r.state === 'open'" d="M2 3l3 3 3-3" fill="none" stroke="#4f5673" stroke-width="2" /><path v-if="r.state === 'closed'" d="M3 2l3 3-3 3" fill="none" stroke="#4f5673" stroke-width="2" /></svg>
              <svg class="ticon" viewBox="0 0 16 16" v-html="icons[r.icon]" />
              <span>{{ r.label }}</span>
            </li>
          </ul>
          <div class="vscroll"><i class="up" /><i class="space" /><i class="thumb"><i class="grip" /></i><i class="down" /></div>
        </div>
      </aside>

      <div class="mdi">
        <section class="editor">
          <div class="etools">
            <svg class="elogo" viewBox="0 0 16 16" v-html="icons.logo" /><i class="bar" />
            <div class="ecombo"><select aria-label="Editor"><option>3D EDITOR</option></select><i class="caret" /></div>
            <i class="qsep" />
            <button class="tb" aria-label="Section"><svg viewBox="0 0 16 16" v-html="icons.sectionH" /></button>
            <button class="tb" aria-label="Layers"><svg viewBox="0 0 16 16" v-html="icons.layers" /></button>
            <i class="slot" />
            <button v-for="e in editorTools" :key="e.icon" class="tb" :aria-label="e.label"><svg viewBox="0 0 16 16" v-html="icons[e.icon!]" /></button>
            <i class="caret" /><i class="bar late" />
            <span class="etitle">05_Floor_Slab_on_Piles_(Concrete)</span>
          </div>
          <div class="canvas">
            <svg class="model" viewBox="257 189 594 833" preserveAspectRatio="xMinYMin slice">
              <defs><linearGradient id="pile"><stop offset="0" stop-color="#6f6a86" /><stop offset=".3" stop-color="#8a86a0" /><stop offset=".7" stop-color="#85819b" /><stop offset="1" stop-color="#6a6680" /></linearGradient></defs>
              <g transform="translate(250 270) scale(.389 .3333)">
                <g v-for="p in piles" :key="p.x"><path :d="`M${p.x} 1000H${p.x + 37}V${p.b - 4}q-18 9-37 0z`" fill="url(#pile)" /><path :d="`M${p.x} ${p.b - 4}q18 9 37 0`" fill="none" stroke="#3b3948" class="ns" /></g>
                <path d="M45 865L340 798 760 715 1050 780 1226 885 1475 1059 1100 1204 605 1258z" fill="#abae9d" />
                <path d="M45 865L605 1258V1306L45 907z" fill="#aeb4a1" />
                <path d="M605 1258L1100 1204V1251L605 1306z" fill="#c4c9b5" />
                <path d="M1100 1204L1475 1059V1098L1100 1251z" fill="#b7bca9" />
                <path d="M45 907V865L605 1258 1100 1204 1475 1059V1098M605 1258V1300" fill="none" stroke="#5c5f57" class="ns" />
                <path d="M45 865L340 798M1226 885L1475 1059" stroke="#5c5f57" stroke-dasharray="2 2" class="ns" />
                <path d="M28 905L605 1308 1100 1254 1487 1102" fill="none" stroke="#5b3018" stroke-width="3" class="ns" />
                <path d="M28 905L605 1308 1100 1254 1487 1102" fill="none" stroke="#9a6038" stroke-width="1" stroke-dasharray="2 2" class="ns" />
                <path d="M297 775h34v27l-34 8z" fill="#8a86a0" />
                <g class="cols">
                  <path d="M1160 880h20v40l-20 4z" /><path d="M168 640h52v245l-40 8-12-5z" /><path d="M338 760h42v256l-16 2-26-12z" /><path d="M438 820h42v266l-16 2-26-14z" /><path d="M625 950h47v252l-40 4-7-6z" /><path d="M1011 900h42v262l-14 4-28-14z" /><path d="M1299 820h50v220l-30 12-20-6z" />
                </g>
                <path d="M182 660V890M358 800v215M378 800v212M459 850v235M632 960v240M1034 950v212M1318 850v200" stroke="#55555a" class="ns" />
                <path d="M297 165h26v225l-26 8z" class="c2" />
                <path d="M315 215L450 300 450 330 340 360 315 350z" fill="#ffff86" /><path d="M315 215L350 238V355H315z" fill="#dcd968" />
                <path d="M190 455L345 555V620L190 650z" fill="#ffff9e" /><path d="M190 455l30 20v160l-30 12z" fill="#deda7c" />
                <path d="M190 648L345 612V760z" fill="#cfc461" />
                <path d="M175 400L340 365V505z" fill="#cfc258" /><path d="M290 378l50-12v50z" fill="#8b7484" />
                <g class="beam">
                  <path d="M300 160L323 165 480 268 440 288 300 205z" />
                  <path d="M168 395L345 515V555L168 437z" /><path d="M168 645L370 775V815L168 683z" />
                  <path d="M168 395h20v255h-20z" />
                </g>
                <path d="M365 400L630 545V715L365 530z" fill="#cfc563" /><path d="M365 640L630 720V962L365 775z" fill="#cfc563" />
                <path d="M675 560L1025 315V670L675 710z" fill="#cfc564" />
                <path d="M830 460L1025 330V475L890 497 830 505z" fill="#ffff48" /><path d="M860 442l90-10 75-30v70l-80 4z" fill="#f0ec30" /><path d="M830 455l70 40-70 10z" fill="#e8dc70" />
                <path d="M675 765L1025 730V916L675 957z" fill="#cfc564" />
                <path d="M1053 310L1310 420V562L1053 665z" fill="#cfc564" />
                <path d="M1053 325L1150 370V436L1053 452z" fill="#ffff50" /><path d="M1053 310l90 40v85l-90-60z" fill="#e4e04a" /><path d="M1175 385L1310 425V535L1175 437z" fill="#ffff62" />
                <path d="M1140 370h30v68h-30z" fill="#b8b070" />
                <path d="M1053 715L1310 608V805L1053 912z" fill="#cfc564" /><path d="M1175 665L1310 608V770L1175 690z" fill="#ffff62" />
                <path d="M815 515L1010 645M835 510L1025 632M815 762L1010 895M835 758L1025 882M675 550L1160 435M675 795L1160 680M1160 435L1300 540M1180 435L1305 530M1160 680L1300 785M470 590L620 555M470 835L620 800M370 510L437 490M370 760L437 740" fill="none" stroke="#b2ab55" class="ns" />
                <path d="M820 516L1010 648M820 764L1010 900" stroke="#cdd478" stroke-width="4" class="ns" />
                <path d="M675 712L1025 670M1053 665L1310 562M675 957L1025 916M1053 910L1310 806M1310 420V562M1310 608V805M470 600L630 710M470 845L630 960M370 530L437 585M370 775L437 830M190 650L340 755M625 590V705" fill="none" stroke="#b3ae12" stroke-width="2" class="ns" />
                <path d="M370 412V530M470 480V600M470 725V845M370 650V770M190 460V648M1170 380V437" fill="none" stroke="#e3e060" stroke-width="4" class="ns" />
                <path d="M1082 550l-25-18M1100 830l-45-35M1100 830l-20-2" stroke="#98904a" class="ns" />
                <g class="beam">
                  <path d="M338 350h28v420h-28z" /><path d="M438 430h30v415l-30-10z" />
                  <path d="M630 550h45v410h-45z" /><path d="M1025 265h28v655h-28z" />
                  <path d="M1310 390h38v410h-38z" />
                  <path d="M1025 672L1350 550V593L1040 716z" /><path d="M1025 918L1350 797V840L1040 962z" />
                  <path d="M1025 672h28v44l-20-2zM1025 918h28v44l-20-2z" />
                </g>
                <path d="M1011 315h16v355h-16zM1011 740h16v176h-16z" fill="#b8b460" />
                <path d="M1035 310V916" stroke="#606064" class="ns" />
                <g class="slab">
                  <path d="M298 575L370 543 632 718 1000 680 1023 722 578 772z" /><path d="M298 822L375 790 632 963 1000 925 1023 967 578 1017z" />
                  <path d="M298 575L578 772V787L298 592zM298 822L578 1017V1033L298 838z" fill="#b6c1d1" />
                  <path d="M578 772L1023 722V738L578 787zM578 1017L1023 967V984L578 1033z" fill="#cad5e4" />
                </g>
                <path d="M630 783h45v177h-45z" fill="#b8b8b8" stroke="#66666a" class="ns" />
                <g class="roof">
                  <path d="M310 160L595 112 700 150 530 240 450 268z" /><path d="M595 112L665 78 772 150 700 150z" fill="#8f7b7c" />
                  <path d="M700 150L1050 187 1165 265 1035 258 805 225z" fill="#95807f" /><path d="M1035 258L1165 265 1345 388z" fill="#998283" />
                  <path d="M345 355L700 150 805 225 1035 262 640 545 460 430z" />
                </g>
                <g class="beam">
                  <path d="M343 355L632 545V592L343 402z" />
                  <path d="M630 550L1035 264V312L675 572 650 590z" fill="#c1c1c1" /><path d="M1050 262L1345 388 1318 425 1053 310z" fill="#bcbcbc" />
                  <path d="M1035 262h20v45h-20zM630 550h45l-28 38zM1318 400l27-12-6 40z" />
                </g>
                <path d="M212 300L522 230 470 262 345 345 345 410 290 376 212 390z" fill="#e6e13c" fill-opacity=".55" />
                <path d="M212 390V300L522 230V243" fill="none" stroke="#c9c53a" class="ns" />
                <path d="M189 313L340 415V500L189 403z" fill="#ffff52" fill-opacity=".5" stroke="#c9c53a" class="ns" />
                <g class="outer"><path d="M310 160L665 78M310 160L595 112M530 240L590 112M665 78L772 150M595 112L700 150M700 150L1050 187 1165 265 1345 388M345 355L700 150 805 225 1035 260M460 430L805 225 640 545M345 355L640 545 1035 262" /></g>
                <g class="inner"><path d="M310 160L665 78M310 160L595 112M530 240L590 112M665 78L772 150M595 112L700 150M700 150L1050 187 1165 265 1345 388M345 355L700 150 805 225 1035 260M460 430L805 225 640 545M345 355L640 545 1035 262" /></g>
                <path d="M535 235L588 115" stroke="#a9a9a9" stroke-width="6" class="ns" />
                <path d="M580 305L696 238M584 296l-4 9 14-2M684 240l12-2-3 10M820 355l58-48M824 347l-4 8 10-1M868 309l10-2-2 9M848 205l52 4M848 205l4-8M900 209l-4 7M464 170l24-2-15 10 15 8-14 10-8-8M656 364l26-2-14 8 10 10-20-2M664 122l20 8-20-4 16 8" fill="none" stroke="#474145" class="ns" />
                <g fill="none">
                  <path d="M150 2105V2010" stroke="#2f97ff" stroke-width="3" class="ns" /><path d="M150 1977L170 2022q-20 8-39 2z" fill="#2f8ff5" />
                  <path d="M150 2105L225 2088" stroke="#3d8050" stroke-width="3" class="ns" /><path d="M208 2066L252 2082 221 2112z" fill="#3b7549" />
                  <path d="M150 2105L180 2125" stroke="#d02438" stroke-width="3" class="ns" /><ellipse cx="188" cy="2132" rx="17" ry="20" fill="#d42a44" /><path d="M195 2114l14 27-24 12z" fill="#e63a56" />
                  <path d="M141 2096h18v18h-18z" fill="#12b5bb" />
                  <path d="M138 2037l8 12-6 14 6 10" stroke="#2b5da8" class="ns" /><path d="M178 2066l8 6 4-10M186 2072l4 16" stroke="#2b5e38" class="ns" /><path d="M166 2082l8 28M174 2086l-8 20" stroke="#a01c2a" stroke-width="2" class="ns" />
                </g>
              </g>
            </svg>
          </div>
          <div class="ehscroll"><div class="etrack"><i class="left" /><i class="ethumb" /></div></div>
        </section>

        <div class="reportcol">
          <section class="report">
            <div class="rtitle">
              <svg class="elogo" viewBox="0 0 16 16" v-html="icons.logo" />
              <h2>05_Floor_Slab_on_Piles_(Concrete) -&nbsp; Calculation Report: Technical Report</h2>
              <button aria-label="Maximise"><svg viewBox="0 0 12 12"><path d="M1 2h10v8H1zM4 5h4v2H4z" fill="#fff" stroke="#4f5668" /></svg></button>
              <button aria-label="Close report"><svg viewBox="0 0 12 12"><path d="M2 2l8 8M10 2l-8 8" stroke="#4f5668" stroke-width="4" /><path d="M2 2l8 8M10 2l-8 8" stroke="#fff" stroke-width="2" /></svg></button>
            </div>
            <div class="rbody">
              <div class="rtools">
                <div class="trow">
                  <div v-for="(grp, gi) in [editGroup, insertGroup]" :key="gi" class="tgroup">
                    <i class="tgrip" />
                    <template v-for="(b, i) in grp" :key="i">
                      <i v-if="b.sep" class="tsep" />
                      <div v-else-if="b.combo" class="fcombo zoom"><select aria-label="Zoom level"><option>{{ b.combo }}</option></select><i class="fdrop"><i class="caret dark" /></i></div>
                      <button v-else class="tool" :class="{ on: b.on }" :aria-label="b.label"><svg viewBox="0 0 16 16" v-html="icons[b.icon!]" /></button>
                    </template>
                  </div>
                </div>
                <div class="trow">
                  <div class="tgroup">
                    <i class="tgrip" />
                    <div class="fcombo font"><select aria-label="Font"><option>Tahoma</option></select><i class="fdrop"><i class="caret dark" /></i></div>
                    <div class="fcombo size"><select aria-label="Font size"><option>5</option></select><i class="fdrop"><i class="caret dark" /></i></div>
                  </div>
                  <div class="tgroup">
                    <i class="tgrip" />
                    <template v-for="(b, i) in formatGroup" :key="i">
                      <i v-if="b.sep" class="tsep" />
                      <button v-else class="tool" :class="{ on: b.on }" :aria-label="b.label"><svg viewBox="0 0 16 16" v-html="icons[b.icon!]" /></button>
                    </template>
                  </div>
                  <div class="tgroup wide"><i class="tgrip" /><button class="tool" aria-label="Typewriter"><svg viewBox="0 0 16 16" v-html="icons.typewriter" /></button></div>
                </div>
              </div>
              <div class="docrow">
                <div class="doccol">
                  <div class="hruler">
                    <i class="tabstop"><svg viewBox="0 0 12 12"><path d="M3 2v7h7" fill="none" stroke="#000" stroke-width="2" /></svg></i>
                    <div class="hscale">
                      <i class="pre"><svg viewBox="0 0 10 14"><path d="M1 1h8v2L5 7l4 4v2H1v-2l4-4-4-4z" fill="#d8d8d8" stroke="#000" /></svg></i>
                      <span v-for="n in 18" :key="n" class="hcell" :class="{ edge: n === 17, out: n > 17 }"><i>·</i><i class="tick" /><i>·</i><b>{{ n }}</b></span>
                      <i class="rest">·</i>
                    </div>
                  </div>
                  <div class="marks"><i v-for="n in 16" :key="n" /></div>
                  <div class="docmid">
                    <div class="vruler"><div class="vscale"><span v-for="n in vRuler" :key="n" class="vcell" :class="{ edge: n === 26, out: n > 26 }"><b>{{ n }}</b><i>·</i><i class="tick" /><i>·</i></span></div></div>
                    <article class="pages">
                      <div class="sheet first">
                        <p>The WGS84 coordinates are:</p>
                        <table class="t1">
                          <colgroup><col class="w33"><col class="w35"><col></colgroup>
                          <thead><tr><th>Latitude</th><th>Longitude</th><th>Altitude</th></tr></thead>
                          <tbody><tr class="unit"><td>[°]</td><td>[°]</td><td>[m]</td></tr><tr><td>40.843056</td><td>15.018056</td><td>560</td></tr></tbody>
                        </table>
                        <h3>6.1 Structural Regularity</h3>
                        <p class="just"><span>The structural regularity is needed to choose the correct analysis method and behaviour factor. The following</span><span class="end">table summarizes structural regularity in both plan and elevation (cfr. 4.2.3.2 and 4.3.2.3 EN 1998-1 (EC8)).</span></p>
                        <table class="t2">
                          <colgroup><col class="w54"><col></colgroup>
                          <thead><tr><th colspan="2">STRUCTURE REGULARITY in PLAN</th></tr></thead>
                          <tbody><tr v-for="r in planRows" :key="r[0]"><td>{{ r[0] }}</td><td>{{ r[1] }}</td></tr></tbody>
                        </table>
                        <table class="t2">
                          <colgroup><col class="w83"><col></colgroup>
                          <thead><tr><th colspan="2">STRUCTURE REGULARITY IN ELEVATION</th></tr></thead>
                          <tbody><tr v-for="(r, i) in elevRows" :key="r[0]" :class="{ tall: i === 2 }"><td>{{ r[0] }}</td><td>{{ r[1] }}</td></tr></tbody>
                        </table>
                        <p class="just"><span>Stiffness is calculated as the ratio of the floor shear. and the relative floor displacement (the floor shear is</span><span>the summation of the horizontal actions above the considered floor).values calculated and used for testing</span><span class="end">are presented in tabular calculation under the relating section.structure is therefore:</span></p>
                        <ul class="bullets"><li>• <b>NON REGULAR</b> in plan;</li><li>• <b>NON REGULAR</b> in elevation.</li></ul>
                        <i class="textcursor" />
                        <div class="footline"><i /><i /></div>
                        <div class="dots">...</div>
                        <div class="pagenum">pag. <span>6</span></div>
                      </div>
                      <div class="gapbar" />
                      <div class="sheet second">
                        <div class="dots">...</div>
                        <div class="headline" />
                        <h3>6.2 Ductility Class</h3>
                        <p class="just"><span>The ductility class is representative of the steel building's capacity to dissipate energy in the inelastic field</span><span>under repeated cyclic actions.deformations must be distributed in the greatest as possible number of ductile</span></p>
                      </div>
                    </article>
                  </div>
                </div>
                <div class="dvscroll"><svg viewBox="0 0 10 8"><path d="M1 6l4-4 4 4" fill="none" stroke="#505050" stroke-width="2" /></svg><i class="dthumb" /><svg viewBox="0 0 10 8"><path d="M1 2l4 4 4-4" fill="none" stroke="#505050" stroke-width="2" /></svg></div>
              </div>
              <div class="dhscroll"><svg viewBox="0 0 8 10"><path d="M6 1L2 5l4 4" fill="none" stroke="#505050" stroke-width="2" /></svg><i /><svg viewBox="0 0 8 10"><path d="M2 1l4 4-4 4" fill="none" stroke="#505050" stroke-width="2" /></svg></div>
              <div class="rstatus"><span>Pag 6/20</span><span>Line 617</span><span>Co 1<svg viewBox="0 0 12 12"><path d="M9 1h2v2H9zM5 5h2v2H5zM9 5h2v2H9zM1 9h2v2H1zM5 9h2v2H5zM9 9h2v2H9z" fill="#1f4a9a" /></svg></span></div>
            </div>
          </section>
          <div class="peek"><i /><i /></div>
        </div>
      </div>

      <aside class="panel props">
        <div class="phead"><svg viewBox="0 0 16 16" v-html="icons.clipboard" /><span>Properties</span><svg class="pin" viewBox="0 0 16 16" v-html="icons.pin" /></div>
        <div class="blueband" />
        <div class="ptabs"><button class="cur">Properties</button><button>Results</button></div>
        <div class="pbody">
          <div class="filter"><label for="entity">Entity filter</label><div class="fsel"><select id="entity" disabled><option /></select><i><i class="caret dim" /></i></div><svg viewBox="0 0 16 16" v-html="icons.lens" /></div>
          <div class="split" />
        </div>
      </aside>

      <nav class="side"><button v-for="s in sideTabs" :key="s.label" :style="{ height: s.h + 'px' }"><svg viewBox="0 0 16 16" v-html="icons[s.icon]" /><span>{{ s.label }}</span></button></nav>
    </main>

    <footer class="status">
      <span class="s1">EdiLus CONCRETE+MASONRY+STEEL (v.45.00d) BIM 3(d) - EN</span>
      <span class="s2"><svg viewBox="0 0 16 16" v-html="icons.hammer" /><b>Reinforced Concrete (Reinforcement</b></span>
      <span class="s3">X: 72.21 - Y: 52.17 - Z: 0.00</span><span class="s4" /><span class="s4" />
      <a href="#" class="s5"><svg viewBox="0 0 16 16" v-html="icons.ask" />Any Questions?</a>
    </footer>
    <div class="taskbar"><i /></div>
  </div>
</template>

<style>
html, body { background: #b8cbe5; }
</style>

<style scoped>
* { box-sizing: border-box; }
.app { display: flex; flex-direction: column; height: 100vh; min-height: 900px; overflow: hidden; font: 11px/14px Roboto, "Liberation Sans", sans-serif; color: #111; background: #b8cbe5; }
button { border: 0; padding: 0; background: none; font: inherit; color: inherit; }
select { appearance: none; border: 0; background: none; font: inherit; color: #000; padding: 0; min-width: 0; opacity: 1; }
svg { display: block; flex: none; }
h1, h2, h3, p, ul { margin: 0; padding: 0; font-weight: 400; }
i { font-style: normal; flex: none; display: block; }
.caret { width: 0; height: 0; border: 4px solid transparent; border-top: 4px solid #4b4f5c; border-bottom: 0; }
.caret.dim { border-top-color: #9a9fa8; }
.caret.dark { border-top-color: #000; }

.titlebar { position: relative; height: 54px; flex: none; background: linear-gradient(#c4d4eb, #b9cde7); border-top: 1px solid #8593ab; border-bottom: 1px solid #7f97b8; display: flex; flex-wrap: wrap; justify-content: space-between; }
.quick { display: flex; align-items: center; height: 28px; }
.tb { width: 24px; height: 24px; display: flex; align-items: center; justify-content: center; flex: none; border-radius: 2px; }
.tb svg { width: 16px; height: 16px; }
.tb.logo { width: 20px; }
.tb.on { border: 1px solid #c29b3c; background: linear-gradient(#fde59a, #fdd468); }
.bar { width: 1px; height: 14px; margin: 0 3px; background: #3a3f4a; }
.qsep { width: 1px; height: 22px; margin: 0 2px; background: #e8f0fa; }
.quick .caret { margin: 0 3px; }
.account { display: flex; align-items: center; justify-content: space-between; width: 157px; height: 24px; margin-left: 2px; padding: 0 12px 0 4px; background: #fff; font: 700 13px/24px Roboto, sans-serif; color: #000; }
.account svg { width: 12px; height: 12px; }
.thin { width: 1px; height: 12px; background: #6d7788; margin: 0 6px 0 4px; }
.more { width: 8px; height: 8px; }
.apptitle { position: absolute; left: 0; right: 0; top: 5px; text-align: center; font: 12px/18px Roboto, sans-serif; color: #1f2f4d; pointer-events: none; }
.winbtns { display: flex; gap: 24px; align-items: center; height: 28px; padding-right: 13px; }
.winbtns svg { width: 12px; height: 12px; }
.tabrow { width: 100%; height: 25px; display: flex; justify-content: space-between; }
.file { width: 56px; height: 25px; border: 1px solid #1c4796; border-bottom: 0; border-radius: 2px 2px 0 0; background: linear-gradient(#3369c0, #265db0 50%, #3f86dc); color: #fff; font: 12px/22px "Open Sans", "Noto Sans", sans-serif; }
.collapse { padding: 0 8px 8px 0; }
.collapse svg { width: 10px; height: 8px; }

.ribbon { position: relative; flex: none; height: 99px; display: flex; background: linear-gradient(#eff6fe, #e2ecf7 50%, #d6e2f0); border-bottom: 1px solid #8fa5c2; font: 12px/16px "Open Sans", "Noto Sans", sans-serif; color: #1f365c; }
.group { position: relative; display: flex; padding-top: 6px; border-right: 1px solid #9db1cb; box-shadow: 1px 0 #f4f8fd; }
.big { display: flex; flex-direction: column; align-items: center; height: 72px; width: 64px; border-radius: 3px; }
.big .face { width: 100%; height: 39px; display: flex; align-items: center; justify-content: center; }
.big .face svg { width: 32px; height: 32px; }
.big .cap { line-height: 20px; }
.big .caret { border-width: 3px 3px 0; margin-top: 2px; }
.big.active { border: 1px solid #c49334; background: #ffe48c; }
.big.active .face { border-bottom: 1px solid #c49334; background: linear-gradient(#fbd365, #fdd772); }
.big.active .cap { line-height: 18px; }
.off { color: #8d939d; }
.group.sel { width: 168px; padding-left: 5px; }
.column { width: 68px; }
.counter { display: flex; flex-direction: column; justify-content: space-between; align-items: center; width: 28px; height: 70px; padding: 3px 0 1px; color: #8d939d; }
.counter svg { width: 14px; height: 14px; }
.gsep { width: 1px; height: 60px; margin-top: 5px; background: #b9c8db; }
.smalls { display: flex; flex-direction: column; width: 24px; }
.smalls button { width: 24px; height: 24px; display: flex; align-items: center; justify-content: center; border-radius: 3px; }
.smalls svg { width: 16px; height: 16px; }
.smalls .on { border: 1px solid #c49334; background: #fdd876; }
.pasteg { width: 79px; }
.pasteg .big { width: 54px; }
.pasteg .smalls { margin-left: -5px; }
.zoomg { width: 83px; }
.zoomg .big { width: 57px; }
.zoomg .smalls { margin-left: -4px; }
.snapg, .viewg { width: 77px; }
.snapg .big, .viewg .big { width: 50px; }
.snapg .smalls { margin-left: -3px; }
.viewg .smalls { margin-left: -2px; }
.visg { width: 87px; }
.visg .big { width: 85px; }
.launcher { position: absolute; right: 5px; bottom: 5px; width: 11px; height: 11px; }
.lock { width: 34px; height: 42px; margin: 20px 16px 0 auto; }

.main { flex: 1; min-height: 0; display: flex; padding-top: 4px; }
.panel { flex: none; display: flex; flex-direction: column; min-height: 0; border: 1px solid #7c90ae; border-radius: 3px; padding: 1px; background: #dfe9f5; }
.nav { width: 245px; margin: 1px 0 3px 3px; background: #cfdced; }
.phead { display: flex; align-items: center; gap: 4px; flex: none; height: 22px; padding: 0 3px 1px 1px; color: #6c7aa6; background: #cfdced; }
.phead svg { width: 16px; height: 16px; }
.phead .pin { margin-left: auto; width: 14px; height: 14px; }
.combo { flex: none; height: 22px; display: flex; background: #fff; font: 13px/20px "DejaVu Sans Condensed", "DejaVu Sans", sans-serif; border: 1px solid #8ba5c9; }
.combo select { flex: 1; padding-left: 1px; }
.drop { width: 17px; display: flex; align-items: center; justify-content: center; background: #d3e2f3; border-left: 1px solid #8ba5c9; }
.navigator { flex: none; height: 45px; padding-top: 10px; text-align: center; background: #0072c6; color: #fff; line-height: 13px; }
.treebox { flex: 1; min-height: 0; display: flex; background: #fff; }
.tree { flex: 1; min-width: 0; overflow: hidden; list-style: none; }
.tree li { position: relative; height: 21px; display: flex; align-items: center; white-space: nowrap; overflow: hidden; }
.tree .l0 { padding-left: 3px; }
.tree .l1 { padding-left: 24px; }
.tree .l2 { padding-left: 45px; }
.guide { position: absolute; top: 0; bottom: 0; border-left: 1px dotted #bcbcbc; }
.guide.half { bottom: 10px; }
.g0 { left: 9px; }
.g1 { left: 30px; }
.g2 { left: 51px; }
.branch { position: absolute; top: 10px; width: 10px; border-top: 1px dotted #bcbcbc; }
.l0 .branch { left: 10px; }
.l1 .branch { left: 31px; }
.l2 .branch { left: 52px; }
.chev { position: relative; width: 12px; height: 12px; margin-right: 6px; }
.ticon { position: relative; width: 16px; height: 16px; margin-right: 2px; }
.tree span { line-height: 21px; padding-left: 2px; flex: 1; }
.selected span { background: #dce8f8; color: #3a62a8; font: 700 11px/21px "DejaVu Sans Condensed", "DejaVu Sans", sans-serif; }
.vscroll { flex: none; width: 16px; padding: 1px 0; background: #d3e0f0; display: flex; flex-direction: column; align-items: center; }
.up, .down { width: 0; height: 0; border: 5px solid transparent; }
.up { border-bottom-color: #4d5d82; margin-top: 0; }
.down { border-top-color: #4d5d82; margin: 6px 0 0; }
.space { flex: 165; }
.thumb { flex: 608; width: 15px; border: 1px solid #8ba5cc; border-radius: 2px; background: linear-gradient(90deg, #dce8f6, #bccfe9); display: flex; align-items: center; justify-content: center; }
.grip { width: 7px; height: 8px; background: repeating-linear-gradient(#7d94bb 0 1px, transparent 1px 2px); }

.mdi { flex: 1; min-width: 0; display: grid; grid-template-columns: minmax(0, 603fr) minmax(0, 815fr); margin-left: 2px; }
.editor { min-width: 0; display: flex; flex-direction: column; background: #dfeaf6; border-top: 1px solid #8ba5c3; border-radius: 6px 0 0 0; padding: 0 0 7px 6px; }
.etools { flex: none; height: 30px; display: flex; align-items: center; padding: 0 0 1px 3px; overflow: hidden; }
.elogo { width: 16px; height: 16px; }
.etools .bar { margin: 0 4px; background: #555; }
.ecombo { display: flex; align-items: center; flex: none; width: 140px; height: 24px; padding-right: 4px; border: 1px solid #b5c6de; background: #e6eff9; font: 12px/20px Roboto, sans-serif; }
.ecombo select { flex: 1; padding-left: 2px; }
.slot { width: 6px; height: 24px; border: 1px solid #a9bcd6; margin: 0 1px; }
.etools .tb { width: 24px; }
.etools > .caret { margin-left: 2px; }
.etools .late { margin: 0 18px 0 8px; height: 15px; }
.etitle { font: 12px/18px Roboto, sans-serif; color: #3d6aae; white-space: nowrap; }
.canvas { flex: 1; min-height: 0; background: #fff; border: 1px solid #7f97b5; border-bottom-color: #979797; overflow: hidden; }
.model { width: 100%; height: 100%; }
.ns, .cols path, .beam path, .slab path, .roof path, .outer path, .inner path { vector-effect: non-scaling-stroke; }
.cols path { fill: #bdbdbd; stroke: #66666a; }
.c2 { fill: #a9a9a9; }
.beam { fill: #b0b0b0; stroke: #606064; }
.slab { fill: #adb6c2; stroke: #5d6672; }
.roof { fill: #a48e8f; }
.outer path { fill: none; stroke: #514c4e; stroke-width: 4; }
.inner path { fill: none; stroke: #a5a5a5; stroke-width: 2; }
.ehscroll { flex: none; height: 26px; padding: 5px 0 3px 11px; background: #f0f0f0; border: 1px solid #7f97b5; border-top: 0; }
.etrack { height: 17px; display: flex; align-items: center; background: linear-gradient(#c9d9ec, #dbe6f4); }
.left { border: 5px solid transparent; border-right-color: #3d5183; border-left: 0; margin-left: 6px; margin-right: auto; }
.ethumb { width: 16px; height: 15px; border: 1px solid #8ba5cc; border-radius: 2px; background: repeating-linear-gradient(90deg, #7d94bb 0 1px, transparent 1px 2px) center / 7px 7px no-repeat, #d3e2f4; margin-right: 38%; }

.reportcol { min-width: 0; min-height: 0; display: flex; flex-direction: column; }
.report { flex: 1; min-height: 0; display: flex; flex-direction: column; border: 1px solid #8296b2; border-radius: 6px 6px 0 0; padding: 0 6px 6px; background: #bdd0e9; }
.rtitle { flex: none; height: 30px; display: flex; align-items: center; padding: 0 13px 0 1px; }
.rtitle h2 { flex: 1; text-align: center; padding-left: 68px; font: 12px/18px Roboto, sans-serif; color: #1f365c; }
.rtitle button { margin-left: 24px; }
.rtitle button svg { width: 12px; height: 12px; }
.rbody { flex: 1; min-height: 0; display: flex; flex-direction: column; border: 1px solid #7189a8; background: #f0f0f0; }
.rtools { flex: none; height: 63px; padding: 1px 0 0 3px; display: flex; flex-direction: column; gap: 1px; background: linear-gradient(90deg, #cbdcf2, #e9f1fb); border-bottom: 2px solid #000; overflow: hidden; }
.trow { display: flex; gap: 2px; }
.tgroup { display: flex; align-items: center; height: 28px; padding: 0 2px 0 0; border: 1px solid #adc1da; border-radius: 4px; background: linear-gradient(#c3d8ee, #d9e7f5); }
.tgrip { width: 2px; height: 20px; margin: 0 3px; background: repeating-linear-gradient(#8a93a0 0 2px, transparent 2px 4px); }
.tool { width: 24px; height: 24px; display: flex; align-items: center; justify-content: center; flex: none; }
.tool svg { width: 16px; height: 16px; }
.tool.on { border: 1px solid #0a1a80; background: linear-gradient(#ffd59a, #ffb35c); }
.tsep { width: 1px; height: 18px; margin: 0 5px 0 4px; background: #9aa6b8; box-shadow: 1px 0 #fff; }
.fcombo { display: flex; height: 24px; background: #fff; font: 11px/18px "DejaVu Sans Condensed", "DejaVu Sans", sans-serif; }
.fcombo select { flex: 1; height: 18px; padding-left: 4px; }
.fdrop { width: 12px; display: flex; align-items: center; justify-content: center; background: linear-gradient(#cfe0f8, #8db0ea); }
.fdrop .caret { border-width: 3px 3px 0; }
.font { width: 190px; }
.size { width: 42px; margin: 0 1px 0 3px; }
.zoom { width: 60px; }
.wide { width: 52px; }
.wide .tool { margin: 0 auto; }
.docrow { flex: 1; min-height: 0; display: flex; }
.doccol { flex: 1; min-width: 0; display: flex; flex-direction: column; background: #c0c0c0; }
.hruler { flex: none; height: 22px; display: flex; align-items: center; padding-top: 3px; }
.tabstop { width: 15px; height: 15px; margin: 0 5px 0 6px; border: 1px solid #555; border-right-color: #000; border-bottom-color: #000; background: #d6d6d6; }
.hscale { flex: 1; min-width: 0; display: flex; height: 15px; overflow: hidden; background: #fff; font: 11px/15px "Liberation Sans", sans-serif; }
.pre { width: 47px; padding-left: 37px; background: linear-gradient(90deg, #808080 42px, #fff 42px); }
.pre svg { width: 10px; height: 15px; }
.hcell { flex: none; width: 38px; display: flex; align-items: center; }
.hcell > *, .vcell > * { flex: 1 1 0; min-width: 0; display: flex; justify-content: center; align-items: center; font-weight: 400; font-style: normal; }
.hcell .tick { flex: 1; height: 5px; background: linear-gradient(#000, #000) center / 1px 5px no-repeat; }
.hcell.out, .rest { background: #808080; }
.hcell.edge { background: linear-gradient(90deg, #fff 30px, #808080 30px); }
.hcell b { position: relative; }
.rest { flex: 1; padding-left: 3px; }
.marks { flex: none; display: flex; gap: 47px; height: 3px; padding-left: 116px; overflow: hidden; }
.marks i { width: 1px; height: 3px; background: #fff; }
.docmid { flex: 1; min-height: 0; display: flex; }
.vruler { flex: none; width: 25px; padding-left: 6px; overflow: hidden; }
.vscale { width: 12px; padding-top: 4px; background: #fff; font: 11px/12px "Liberation Sans", sans-serif; }
.vcell { display: flex; flex-direction: column; height: 38px; width: 12px; }
.vcell > * { min-height: 0; width: 12px; }
.vcell b { writing-mode: vertical-rl; rotate: 180deg; white-space: nowrap; }
.vcell .tick { background: linear-gradient(#000, #000) center / 5px 1px no-repeat; }
.vcell.out { background: #808080; }
.vcell.edge { background: linear-gradient(#fff 28px, #808080 28px); }
.vcell:last-child { height: 12px; overflow: hidden; }
.vcell:last-child > i { display: none; }
.pages { flex: 1; min-width: 0; overflow: hidden; background: #fff; font: 13px/16px "DejaVu Sans Condensed", "DejaVu Sans", sans-serif; color: #000; }
.sheet { padding: 0 72px 0 43px; }
.first { padding-top: 9px; height: 544px; }
.sheet h3 { font: 700 17px/20px "DejaVu Sans Condensed", "DejaVu Sans", sans-serif; margin: 16px 0 18px; }
.just span { display: block; white-space: nowrap; text-align: justify; text-align-last: justify; }
.just .end { text-align-last: left; }
table { width: 100%; table-layout: fixed; border-collapse: collapse; margin: 7px 0 8px; font-size: 11px; line-height: 12px; }
th, td { border: 1px solid #000; padding: 0 6px; text-align: center; height: 13px; overflow: hidden; }
th { background: #b2b2b2; height: 16px; }
.t1 th { background: #ccc; height: 14px; }
.t1 .unit td { height: 17px; }
.t2 td:first-child { text-align: left; font-family: Roboto, sans-serif; }
.t2 .tall td { height: 21px; }
.w33 { width: 33%; }
.w35 { width: 34%; }
.w54 { width: 54%; }
.w83 { width: 83%; }
.bullets { list-style: none; margin-top: 8px; }
.textcursor { width: 1px; height: 9px; margin: 8px 0 17px; background: #000; }
.footline { display: flex; gap: 1px; margin: 0 -26px 2px -4px; }
.footline i { height: 1px; background: #000; flex: 1; }
.footline i + i { flex: none; width: 21px; }
.dots { line-height: 14px; text-align: right; font-size: 10px; color: #444; }
.first .dots { margin-right: -9px; }
.pagenum { margin-top: 6px; text-align: center; font-size: 11px; color: #555; }
.pagenum span { background: #bcbcbc; color: #111; padding: 0 1px; }
.gapbar { height: 32px; border-top: 3px solid #000; border-bottom: 1px solid #000; background: #8e8e8e; }
.second .dots { padding-top: 56px; }
.headline { height: 1px; margin: 0 -4px; background: #000; }
.second h3 { margin: 4px 0 16px; }
.dvscroll { flex: none; width: 17px; padding: 4px 0; background: #f0f0f0; display: flex; flex-direction: column; align-items: center; }
.dvscroll svg { width: 10px; height: 8px; }
.dthumb { width: 15px; height: 23px; margin: 202px 0 auto; background: #cdcdcd; }
.dhscroll { flex: none; height: 18px; display: flex; align-items: center; background: #f0f0f0; padding: 0 21px 0 4px; }
.dhscroll svg { width: 8px; height: 10px; }
.dhscroll i { flex: 1; height: 15px; margin: 0 30px 0 54px; background: #cdcdcd; }
.rstatus { flex: none; height: 20px; display: flex; gap: 2px; font: 12px/18px Roboto, sans-serif; background: #c2d8f7; }
.rstatus span { padding-left: 2px; border: 1px solid #7d9fd6; background: linear-gradient(#dbe9fd, #c1d7f6 60%, #94b6e8); width: 124px; }
.rstatus span:nth-child(2) { width: 165px; }
.rstatus span:last-child { flex: 1; display: flex; justify-content: space-between; align-items: flex-end; }
.rstatus svg { width: 10px; height: 10px; margin: 0 2px 2px; }
.peek { flex: none; height: 8px; display: flex; }
.peek i:first-child { width: 148px; background: #dfeaf6; border-bottom: 1px solid #a4b3c8; }
.peek i + i { width: 257px; background: #f0f0f0; clip-path: polygon(0 0, 242px 0, 100% 100%, 0 100%); }

.props { width: 215px; margin: 1px 0 3px 8px; }
.blueband { flex: none; height: 35px; background: #0072c6; }
.ptabs { flex: none; display: flex; align-items: flex-end; height: 28px; padding-left: 6px; background: #e6f0fb; color: #1f365c; }
.ptabs button { height: 24px; width: 52px; border: 1px solid #7f9cc4; border-bottom: 0; background: #a9c1de; }
.ptabs .cur { position: relative; width: 67px; height: 27px; background: #fff; margin-right: -1px; margin-bottom: -1px; }
.pbody { flex: 1; margin: 0 4px 4px 2px; border: 1px solid #7f9cc4; background: #fff; box-shadow: 3px 3px 3px #b5c3d6; padding: 6px 6px 0 23px; display: flex; flex-direction: column; }
.filter { display: flex; align-items: center; height: 20px; color: #1f4488; }
.filter label { width: 67px; }
.fsel { display: flex; width: 81px; height: 19px; border: 1px solid #9dabc6; background: #f0f0f0; }
.fsel select { flex: 1; }
.fsel > i { width: 17px; display: flex; align-items: center; justify-content: center; border-left: 1px solid #9dabc6; }
.filter svg { width: 16px; height: 16px; margin-left: 9px; }
.split { flex: 1; width: 1px; margin: 4px 0 0 112px; background: #bcd3f2; }

.side { flex: none; display: flex; flex-direction: column; gap: 5px; width: 29px; padding: 3px 1px 0 4px; background: #cfdcee; }
.side button { display: flex; align-items: center; gap: 7px; writing-mode: vertical-rl; white-space: nowrap; flex: none; width: 24px; padding: 4px 0; border: 1px solid #7f9cc4; border-right: 0; background: linear-gradient(90deg, #d5e4f6, #c3d6ef); color: #1f4488; font-size: 11px; }
.side svg { width: 16px; height: 16px; }

.status { flex: none; height: 22px; display: flex; background: #b5c9e4; color: #1f365c; line-height: 22px; }
.status span, .status a { white-space: nowrap; overflow: hidden; border-top: 1px solid #8fa5c2; }
.s1, .s3, .s4, .s5 { background: linear-gradient(#d4e0ef, #bfcee2 50%, #b3c4dc); border-right: 1px solid #eef4fb; }
.s1 { flex: 1; padding-left: 1px; }
.s2 { width: 222px; display: flex; align-items: center; gap: 4px; padding-left: 1px; color: #3d66ac; font: 12px/20px Roboto, sans-serif; }
.status .s2 { border-top: 0; }
.s2 svg { width: 12px; height: 12px; }
.s3 { width: 147px; padding-left: 4px; }
.s4 { width: 26px; }
.s5 { width: 112px; margin-left: 23px; padding-left: 4px; display: flex; align-items: center; gap: 4px; color: #111; text-decoration: none; }
.s5 svg { width: 16px; height: 16px; }
.taskbar { flex: none; height: 2px; background: #2a2c38; display: flex; }
.taskbar i { margin-left: 48px; width: 340px; background: #e4e2df; }
</style>
